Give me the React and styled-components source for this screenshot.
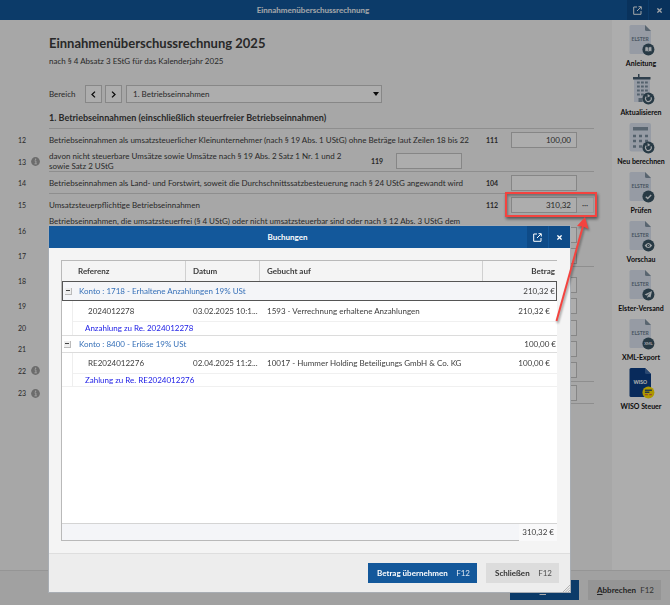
import React from "react";
import styled, { createGlobalStyle, css } from "styled-components";

const blue = "#13589b";
const line = "#d2d2d2";

const GlobalStyle = createGlobalStyle`
  *, *::before, *::after { box-sizing: border-box; }
  html, body, #root { height: 100%; }
  body {
    margin: 0;
    font-family: Lato, "Open Sans", sans-serif;
    font-size: 8px;
    line-height: 11px;
    color: #3c3c3c;
    background: #f6f6f6;
  }
  button, input, select { font: inherit; color: inherit; margin: 0; }
  h1, h2, p { margin: 0; }
`;

/* ---------- window frame ---------- */

const Page = styled.div`
  min-height: 100%;
  display: grid;
  grid-template-rows: auto 1fr auto;
`;

const TitleBar = styled.header`
  display: flex;
  height: ${(p) => (p.$modal ? 22 : 20)}px;
  background: ${blue};
  color: ${(p) => (p.$modal ? "#fff" : "#f0f4f8")};
`;

const WindowTitle = styled.h2`
  flex: 1;
  display: flex;
  align-items: center;
  justify-content: center;
  font-size: 8px;
  font-weight: 700;
`;

const TitleButton = styled.button`
  width: 22px;
  padding: 0;
  border: 0;
  border-left: 1px solid ${blue};
  display: grid;
  place-items: center;
  background: #0e4b88;
  color: inherit;
`;

const Body = styled.div`
  display: grid;
  grid-template-columns: 1fr 58px;
`;

const Footer = styled.footer`
  display: flex;
  justify-content: flex-end;
  gap: 9px;
  padding: ${(p) => (p.$modal ? "9px 11px" : "9px 9px 5px")};
  border-top: 1px solid ${(p) => (p.$modal ? "#dedede" : "#dcdcdc")};
  background: ${(p) => (p.$modal ? "#ededed" : "#eeeeee")};
`;

const buttonWidths = { small: 69, medium: 73, wide: 109 };

const ActionButton = styled.button`
  min-width: ${(p) => buttonWidths[p.$size || "medium"]}px;
  height: 20px;
  padding: 0 7px 0 9px;
  border: 0;
  display: flex;
  align-items: center;
  justify-content: ${(p) => (p.$size === "small" ? "center" : "space-between")};
  background: ${(p) => (p.$primary ? blue : "#dcdcdc")};
  color: ${(p) => (p.$primary ? "#fff" : "#333")};
  font-weight: 700;
`;

const Shortcut = styled.span`
  font-weight: 400;
  opacity: 0.85;
`;

/* ---------- form ---------- */

const Form = styled.main`
  padding: 15px 18px 0 0;
`;

const Intro = styled.div`
  padding-left: 49px;
`;

const Heading = styled.h1`
  font-size: 13px;
  line-height: 16px;
`;

const Subtitle = styled.p`
  padding: 5px 0 18px;
`;

const AreaBar = styled.div`
  display: flex;
  align-items: center;
  gap: 3px;
`;

const AreaLabel = styled.label`
  width: 33px;
`;

const controlBox = css`
  height: 18px;
  border: 1px solid #c8c8c8;
  border-radius: 0;
  background: #fff;
`;

const StepButton = styled.button`
  ${controlBox}
  width: 17px;
  padding: 0;
  display: grid;
  place-items: center;
  color: #111;
`;

const SelectBox = styled.div`
  display: grid;
  align-items: center;
  width: 47%;
  margin-left: 1px;
  > * { grid-area: 1 / 1; }
  > svg { justify-self: end; margin-right: 3px; pointer-events: none; }
`;

const AreaSelect = styled.select`
  ${controlBox}
  width: 100%;
  padding: 0 6px;
  appearance: none;
`;

const SectionTitle = styled.h2`
  padding: 9px 0 5px;
  border-bottom: 1px solid ${line};
  font-size: 9px;
  line-height: 11px;
`;

const FormRow = styled.div`
  display: grid;
  grid-template-columns: 49px 1fr;
  min-height: ${(p) => p.$height}px;
  line-height: 10px;
`;

const Gutter = styled.div`
  display: flex;
  align-items: center;
  gap: 5px;
  padding-left: 15px;
`;

const LineNumber = styled.span`
  width: 11px;
  font-size: 7px;
  text-align: right;
`;

const RowContent = styled.div`
  display: flex;
  align-items: center;
  border-bottom: ${(p) => (p.$ruled ? `1px solid ${line}` : "0")};
`;

const RowText = styled.label`
  flex: 1;
  padding-right: 12px;
  align-self: ${(p) => (p.$top ? "start" : "auto")};
`;

const Code = styled.span`
  width: 25px;
  font-size: 7px;
  font-weight: 700;
`;

const Field = styled.div`
  display: flex;
  width: ${(p) => (p.$inset ? 198 : 83)}px;
  padding-top: ${(p) => (p.$low ? 8 : 0)}px;
`;

const AmountInput = styled.input`
  width: 66px;
  height: 16px;
  padding: 0 5px;
  border: 1px solid #c6c6c6;
  background: #fff;
  text-align: right;
`;

const MoreButton = styled.button`
  width: 17px;
  height: 16px;
  padding: 0;
  border: 1px solid #e2e2e2;
  border-left: 0;
  background: none;
  line-height: 8px;
`;

/* ---------- sidebar ---------- */

const Sidebar = styled.nav`
  display: flex;
  flex-direction: column;
  padding-top: 4px;
  background: #fff;
`;

const Tool = styled.button`
  height: 49px;
  padding: 0;
  border: 0;
  display: flex;
  flex-direction: column;
  align-items: center;
  gap: 2px;
  background: none;
  color: #111;
  font-size: 7px;
  font-weight: 700;
  line-height: 11px;
  white-space: nowrap;
`;

/* ---------- modal ---------- */

const Backdrop = styled.div`
  position: fixed;
  inset: 0;
  display: grid;
  padding: 226px 100px 13px 49px;
  background: rgba(0, 0, 0, 0.32);
`;

const Modal = styled.section`
  display: flex;
  flex-direction: column;
  background: #f4f4f4;
  box-shadow: 0 0 0 1px #a8adb3;
  position: relative;
`;

const ModalBody = styled.div`
  flex: 1;
  display: flex;
  flex-direction: column;
  padding: 12px 13px 12px 12px;
`;

const TablePanel = styled.div`
  flex: 1;
  display: flex;
  flex-direction: column;
  border: solid #b9b9b9;
  border-width: 1px 0 1px 1px;
  background: #fff;
`;

const BookingTable = styled.table`
  width: 100%;
  table-layout: fixed;
  border-collapse: separate;
  border-spacing: 0;
  td, th { padding: 0; white-space: nowrap; }
`;

const GutterCol = styled.col`width: 11px;`;
const ReferenceCol = styled.col`width: 113px;`;
const DateCol = styled.col`width: 74px;`;
const AmountCol = styled.col`width: 74px;`;

const HeadCell = styled.th`
  && { padding: 0 ${(p) => (p.$end ? 2 : 7)}px 0 ${(p) => (p.$first ? 16 : 7)}px; }
  height: 20px;
  border-right: ${(p) => (p.$end ? 0 : 1)}px solid #d0d0d0;
  background: #f4f4f4;
  text-align: ${(p) => (p.$end ? "right" : "left")};
`;

const GroupRow = styled.tr`
  td {
    height: ${(p) => (p.$selected ? 20 : 18)}px;
    border: solid ${(p) => (p.$selected ? "#555" : "#dcdcdc")};
    border-width: 1px 0;
    background: ${(p) => (p.$selected ? "#f4f5f8" : "#fff")};
  }
  td:first-child { border-left-width: ${(p) => (p.$selected ? 1 : 0)}px; }
  td:last-child { border-right-width: ${(p) => (p.$selected ? 1 : 0)}px; padding-right: 1px; text-align: right; }
`;

const GroupName = styled.td`
  && { padding-left: 6px; }
  color: #3670b8;
`;

const Toggle = styled.button`
  display: block;
  width: 7px;
  height: 7px;
  margin-left: 2px;
  padding: 0;
  border: solid #bbb;
  border-width: 0 1px 1px 0;
  background: linear-gradient(#444, #444) center / 4px 1px no-repeat #eee;
`;

const EntryRow = styled.tr`
  td { height: 21px; padding: 0 7px; border-bottom: 1px solid #f0f0f0; }
  td:first-child { border-right: 1px solid #eee; border-bottom: 0; }
  td:nth-child(2) { padding-left: 15px; }
  td:last-child { text-align: right; }
`;

const NoteRow = styled.tr`
  td { height: 13px; border-bottom: ${(p) => (p.$last ? 1 : 0)}px solid #f0f0f0; }
  td:first-child { border-right: 1px solid #eee; }
  td:last-child { padding-left: 12px; color: #1a1ae6; }
`;

const TotalBar = styled.div`
  display: flex;
  justify-content: flex-end;
  height: 17px;
  margin-top: auto;
  border-top: 1px solid #d4d4d4;
  background: #f4f5f8;
`;

const TotalAmount = styled.output`
  display: flex;
  align-items: center;
  margin-bottom: -1px;
  padding: 0 3px;
  background: #f9f9fa;
`;

const ResizeGrip = styled.svg`
  position: absolute;
  right: 0;
  bottom: 0;
`;

/* ---------- annotation ---------- */

const Highlight = styled.div`
  position: fixed;
  top: 192px;
  right: 73px;
  width: 92px;
  height: 25px;
  border: 2px solid #f4433f;
  box-shadow: 1px 2px 3px rgba(0, 0, 0, 0.5), inset 1px 2px 3px rgba(0, 0, 0, 0.35);
  pointer-events: none;
`;

const Arrow = styled.svg`
  position: fixed;
  top: 214px;
  right: 70px;
  filter: drop-shadow(1px 2px 1px rgba(0, 0, 0, 0.4));
  pointer-events: none;
`;

/* ---------- icons ---------- */

const PopOutIcon = () => (
  <svg width="9" height="9" viewBox="0 0 9 9" fill="none" stroke="currentColor" strokeWidth="1">
    <path d="M4 1H.7v7.3H8V5M5.5.7h2.8v2.8M8 1 4 5" />
  </svg>
);

const CloseIcon = () => (
  <svg width="5" height="5" viewBox="0 0 5 5" stroke="currentColor" strokeWidth="1.3">
    <path d="m.4.4 4.2 4.2M4.6.4.4 4.6" />
  </svg>
);

const Chevron = ({ right }) => (
  <svg width="5" height="7" viewBox="0 0 5 7" fill="none" stroke="currentColor" strokeWidth="1.3">
    <path d={right ? "M1 .6 4 3.5 1 6.4" : "M4 .6 1 3.5 4 6.4"} />
  </svg>
);

const InfoIcon = () => (
  <svg width="9" height="9" viewBox="0 0 9 9" role="img" aria-label="Info">
    <circle cx="4.5" cy="4.5" r="4.4" fill="#a0a0a0" />
    <path d="M3.6 3.9h1.3v2.7M3.5 6.8h2.3" fill="none" stroke="#eee" strokeWidth="1" />
    <circle cx="4.6" cy="2.3" r=".7" fill="#eee" />
  </svg>
);

const badges = {
  book: (
    <path d="M17 23q1.800-.8 3.400.2 1.600-1 3.400-.2v4.600q-1.800-.7-3.400.3-1.600-1-3.400-.3zM20.400 23v4.600" fill="#eef3f8" stroke="#3b5666" strokeWidth=".6" />
  ),
  refresh: (
    <g>
      <path d="M18.200 23.700a2.900 2.900 0 1 0 4.800.6" fill="none" stroke="#eef3f8" strokeWidth="1.100" />
      <path d="M19.600 20.900v3.600l2.800-1.500z" fill="#eef3f8" />
    </g>
  ),
  check: <path d="m17.800 25.700 1.900 1.800 3.500-3.600" fill="none" stroke="#eef3f8" strokeWidth="1.400" />,
  eye: (
    <g>
      <path d="M16.600 25.500q3.800-5.200 7.600 0-3.800 5.200-7.600 0z" fill="#eef3f8" />
      <circle cx="20.400" cy="25.500" r="1.500" fill="#3b5666" />
      <circle cx="20.400" cy="25.500" r=".5" fill="#eef3f8" />
    </g>
  ),
  plane: <path d="m24 22-7.400 3.500 2 1 3.500-2.700-2.700 3.200v2l1.400-1.300 1.700.8z" fill="#eef3f8" />,
  xml: (
    <text x="20.400" y="27.100" fontSize="4" fontWeight="700" textAnchor="middle" fill="#eef3f8">XML</text>
  ),
  form: (
    <g strokeWidth="1">
      <path d="M16.900 23.200h7M16.900 25.300h4.500" stroke="#3b5666" strokeWidth="1.400" />
      <path d="M16.900 27.700h3M21.200 27.700h2.700" stroke="#e0524a" />
    </g>
  ),
};

const Badge = ({ kind }) => (
  <g>
    <circle cx="20.400" cy="25.500" r="6" fill={kind === "form" ? "#ffe000" : "#3b5666"} />
    {badges[kind]}
  </g>
);

const Sheet = ({ text = "ELSTER", wiso }) => (
  <g>
    <path d="M1.500 2.500q0-1.500 1.500-1.500h14l6 6v21.500q0 1.500-1.500 1.500H3q-1.500 0-1.500-1.500z" fill={wiso ? "#0c3f86" : "#dde5f2"} />
    <path d="M17 1v4.500q0 1.500 1.500 1.500H23z" fill={wiso ? "#3f6ba8" : "#8496a6"} />
    <text x="12.200" y="16.500" fontSize="5" fontWeight={wiso ? 900 : 700} textAnchor="middle" fill={wiso ? "#fff" : "#6c7d8e"}>{text}</text>
  </g>
);

const Building = () => (
  <g>
    <path d="M6 4h16v25H6z" fill="#dde5f2" />
    <path d="M5 4h17.500v2.500H5zM10 1h1.500v4H10z" fill="#465e70" />
    <path d="M9 9.500h11M9 13.500h11M9 17.500h11M9 21.500h11" stroke="#7c8fa0" strokeWidth="2" strokeDasharray="2.800 1.200" />
    <path d="M10.500 25h4v4h-4z" fill="#7c8fa0" />
  </g>
);

const Calculator = () => (
  <g>
    <rect x="1.500" y="1" width="21.500" height="28.500" rx="2" fill="#dde5f2" />
    <path d="M5 5h15v3.500H5z" fill="#8496a6" />
    <path d="M5 14h15M5 19h15M5 24.500h15" stroke="#7c8fa0" strokeWidth="2.600" strokeDasharray="3 3" />
  </g>
);

const ToolIcon = ({ base, badge }) => (
  <svg width="27" height="32" viewBox="0 0 27 32" aria-hidden="true">
    {base}
    <Badge kind={badge} />
  </svg>
);

/* ---------- data ---------- */

const tools = [
  { label: "Anleitung", base: <Sheet />, badge: "book" },
  { label: "Aktualisieren", base: <Building />, badge: "refresh" },
  { label: "Neu berechnen", base: <Calculator />, badge: "refresh" },
  { label: "Prüfen", base: <Sheet />, badge: "check" },
  { label: "Vorschau", base: <Sheet />, badge: "eye" },
  { label: "Elster-Versand", base: <Sheet />, badge: "plane" },
  { label: "XML-Export", base: <Sheet />, badge: "xml" },
  { label: "WISO Steuer", base: <Sheet text="WISO" wiso />, badge: "form" },
];

const formRows = [
  { no: 12, height: 22, code: "111", value: "100,00", text: "Betriebseinnahmen als umsatzsteuerlicher Kleinunternehmer (nach § 19 Abs. 1 UStG) ohne Beträge laut Zeilen 18 bis 22" },
  { no: 13, height: 21, code: "119", info: true, inset: true, ruled: true, text: "davon nicht steuerbare Umsätze sowie Umsätze nach § 19 Abs. 2 Satz 1 Nr. 1 und 2 sowie Satz 2 UStG" },
  { no: 14, height: 22, code: "104", ruled: true, text: "Betriebseinnahmen als Land- und Forstwirt, soweit die Durchschnittssatzbesteuerung nach § 24 UStG angewandt wird" },
  { no: 15, height: 22, code: "112", value: "310,32", more: true, text: "Umsatzsteuerpflichtige Betriebseinnahmen" },
  { no: 16, height: 29, low: true, text: "Betriebseinnahmen, die umsatzsteuerfrei (§ 4 UStG) oder nicht umsatzsteuerbar sind oder nach § 12 Abs. 3 UStG dem" },
  { no: 17, height: 22, ruled: true },
  { no: 18, height: 28, low: true },
  { no: 19, height: 22 },
  { no: 20, height: 21 },
  { no: 21, height: 21 },
  { no: 22, height: 23, info: true, ruled: true },
  { no: 23, height: 22, info: true, ruled: true },
];

const bookings = [
  {
    account: "Konto : 1718 - Erhaltene Anzahlungen 19% USt", sum: "210,32 €", selected: true,
    reference: "2024012278", date: "03.02.2025 10:1...", target: "1593 - Verrechnung erhaltene Anzahlungen",
    amount: "210,32 €", note: "Anzahlung zu Re. 2024012278",
  },
  {
    account: "Konto : 8400 - Erlöse 19% USt", sum: "100,00 €",
    reference: "RE2024012276", date: "02.04.2025 11:2...", target: "10017 - Hummer Holding Beteiligungs GmbH & Co. KG",
    amount: "100,00 €", note: "Zahlung zu Re. RE2024012276",
  },
];

const WindowButtons = () => (
  <>
    <TitleButton aria-label="In eigenem Fenster öffnen"><PopOutIcon /></TitleButton>
    <TitleButton aria-label="Schließen"><CloseIcon /></TitleButton>
  </>
);

export default function App() {
  return (
    <>
      <GlobalStyle />
      <Page>
        <TitleBar>
          <WindowTitle>Einnahmenüberschussrechnung</WindowTitle>
          <WindowButtons />
        </TitleBar>
        <Body>
          <Form>
            <Intro>
              <Heading>Einnahmenüberschussrechnung 2025</Heading>
              <Subtitle>nach § 4 Absatz 3 EStG für das Kalenderjahr 2025</Subtitle>
              <AreaBar>
                <AreaLabel htmlFor="area">Bereich</AreaLabel>
                <StepButton aria-label="Vorheriger Bereich"><Chevron /></StepButton>
                <StepButton aria-label="Nächster Bereich"><Chevron right /></StepButton>
                <SelectBox>
                  <AreaSelect id="area"><option>1. Betriebseinnahmen</option></AreaSelect>
                  <svg width="6" height="4" viewBox="0 0 6 4"><path d="M0 0h6L3 4z" fill="#111" /></svg>
                </SelectBox>
              </AreaBar>
              <SectionTitle>1. Betriebseinnahmen (einschließlich steuerfreier Betriebseinnahmen)</SectionTitle>
            </Intro>
            {formRows.map((r) => (
              <FormRow key={r.no} $height={r.height}>
                <Gutter>
                  <LineNumber>{r.no}</LineNumber>
                  {r.info && <InfoIcon />}
                </Gutter>
                <RowContent $ruled={r.ruled}>
                  <RowText htmlFor={`line-${r.no}`} $top={r.low}>{r.text}</RowText>
                  <Code>{r.code}</Code>
                  <Field $inset={r.inset} $low={r.low}>
                    <AmountInput id={`line-${r.no}`} defaultValue={r.value} />
                    {r.more && <MoreButton aria-label="Buchungen anzeigen">···</MoreButton>}
                  </Field>
                </RowContent>
              </FormRow>
            ))}
          </Form>
          <Sidebar>
            {tools.map((t) => (
              <Tool key={t.label}>
                <ToolIcon base={t.base} badge={t.badge} />
                {t.label}
              </Tool>
            ))}
          </Sidebar>
        </Body>
        <Footer>
          <ActionButton $primary $size="small"><span><u>O</u>K</span></ActionButton>
          <ActionButton><span><u>A</u>bbrechen</span><Shortcut>F12</Shortcut></ActionButton>
        </Footer>
      </Page>

      <Backdrop>
        <Modal role="dialog" aria-label="Buchungen">
          <TitleBar $modal>
            <WindowTitle>Buchungen</WindowTitle>
            <WindowButtons />
          </TitleBar>
          <ModalBody>
            <TablePanel>
              <BookingTable>
                <colgroup>
                  <GutterCol /><ReferenceCol /><DateCol /><col /><AmountCol />
                </colgroup>
                <thead>
                  <tr>
                    <HeadCell colSpan={2} $first>Referenz</HeadCell>
                    <HeadCell>Datum</HeadCell>
                    <HeadCell>Gebucht auf</HeadCell>
                    <HeadCell $end>Betrag</HeadCell>
                  </tr>
                </thead>
                {bookings.map((b, i) => (
                  <tbody key={b.account}>
                    <GroupRow $selected={b.selected}>
                      <td><Toggle aria-label="Gruppe zuklappen" /></td>
                      <GroupName colSpan={3}>{b.account}</GroupName>
                      <td>{b.sum}</td>
                    </GroupRow>
                    <EntryRow>
                      <td />
                      <td>{b.reference}</td>
                      <td>{b.date}</td>
                      <td>{b.target}</td>
                      <td>{b.amount}</td>
                    </EntryRow>
                    <NoteRow $last={i === bookings.length - 1}>
                      <td />
                      <td colSpan={4}>{b.note}</td>
                    </NoteRow>
                  </tbody>
                ))}
              </BookingTable>
              <TotalBar><TotalAmount>310,32 €</TotalAmount></TotalBar>
            </TablePanel>
          </ModalBody>
          <Footer $modal>
            <ActionButton $primary $size="wide">Betrag übernehmen<Shortcut>F12</Shortcut></ActionButton>
            <ActionButton>Schließen<Shortcut>F12</Shortcut></ActionButton>
          </Footer>
          <ResizeGrip width="8" height="8" viewBox="0 0 8 8" stroke="#999" strokeWidth=".7" aria-hidden="true">
            <path d="M1 8 8 1M3.500 8 8 3.500M6 8l2-2" />
          </ResizeGrip>
        </Modal>
      </Backdrop>

      <Highlight />
      <Arrow width="48" height="112" viewBox="0 0 48 112" aria-hidden="true">
        <path d="M4.500 107 31 12" stroke="#f4433f" strokeWidth="2" />
        <path d="M33 3 36.500 15 31 12.500 25 12z" fill="#f4433f" />
      </Arrow>
    </>
  );
}
